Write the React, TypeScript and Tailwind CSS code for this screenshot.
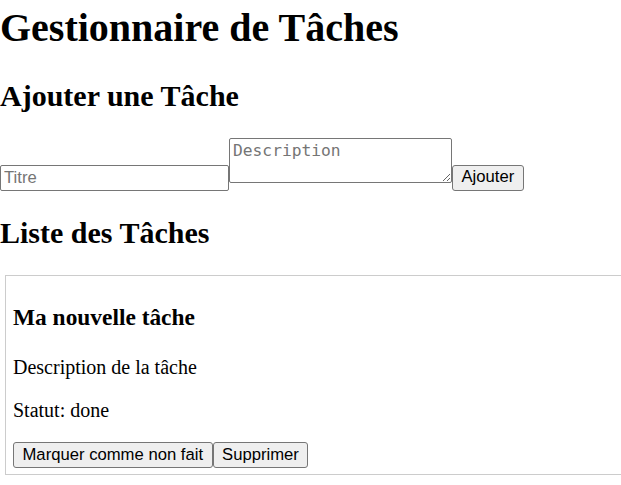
import React, { useState } from 'react';

interface Task {
  id: number;
  title: string;
  description: string;
  status: 'todo' | 'done';
}

const btn =
  "h-[26px] px-[8.5px] bg-[#efefef] border border-[#767676] rounded-[3px] font-['Liberation_Sans',Arial,sans-serif] text-[16.67px] leading-none text-black";

const App: React.FC = () => {
  const [title, setTitle] = useState('');
  const [description, setDescription] = useState('');
  const [tasks, setTasks] = useState<Task[]>([
    { id: 1, title: 'Ma nouvelle tâche', description: 'Description de la tâche', status: 'done' },
  ]);

  const addTask = (e: React.FormEvent) => {
    e.preventDefault();
    if (!title.trim()) return;
    setTasks(prev => [...prev, { id: Date.now(), title, description, status: 'todo' }]);
    setTitle('');
    setDescription('');
  };

  const toggleTask = (id: number) =>
    setTasks(prev => prev.map(t => (t.id === id ? { ...t, status: t.status === 'done' ? 'todo' : 'done' } : t)));

  const deleteTask = (id: number) => setTasks(prev => prev.filter(t => t.id !== id));

  return (
    <div className="w-full min-h-screen overflow-hidden bg-white text-black font-['Liberation_Serif','Times_New_Roman',serif] text-[20px]">
      <h1 className="mt-[5px] mb-[28px] text-[40px] leading-[46px] font-bold">Gestionnaire de Tâches</h1>

      <h2 className="mb-[24px] text-[30px] leading-[34.5px] font-bold">Ajouter une Tâche</h2>
      <form onSubmit={addTask} className="flex items-end">
        <input
          type="text"
          placeholder="Titre"
          value={title}
          onChange={e => setTitle(e.target.value)}
          className="w-[229px] h-[26px] px-[3px] border border-[#767676] rounded-[2px] bg-white font-['Liberation_Sans',Arial,sans-serif] text-[16.67px] placeholder:text-[#757575] outline-none"
        />
        <textarea
          placeholder="Description"
          value={description}
          onChange={e => setDescription(e.target.value)}
          className="w-[223px] h-[45px] mb-[8px] px-[3px] py-[2px] border border-[#767676] rounded-[2px] bg-white font-['DejaVu_Sans_Mono',monospace] text-[16.25px] leading-[19px] placeholder:text-[#757575] resize outline-none"
        />
        <button type="submit" className={btn}>Ajouter</button>
      </form>

      <h2 className="mt-[25px] mb-[25px] text-[30px] leading-[34.5px] font-bold">Liste des Tâches</h2>
      <div>
        {tasks.map(task => (
          <div key={task.id} className="ml-[5px] w-[640px] border border-[#cccccc] px-[7px] pt-[5px] pb-[6px]">
            <h3 className="mt-[23px] mb-[25px] text-[23.4px] leading-[27px] font-bold">{task.title}</h3>
            <p className="mb-[20px] leading-[23px]">{task.description}</p>
            <p className="mb-[20px] leading-[23px]">Statut: {task.status}</p>
            <div className="flex">
              <button className={btn} onClick={() => toggleTask(task.id)}>
                {task.status === 'done' ? 'Marquer comme non fait' : 'Marquer comme fait'}
              </button>
              <button className={btn} onClick={() => deleteTask(task.id)}>Supprimer</button>
            </div>
          </div>
        ))}
      </div>
    </div>
  );
};

export default App;
